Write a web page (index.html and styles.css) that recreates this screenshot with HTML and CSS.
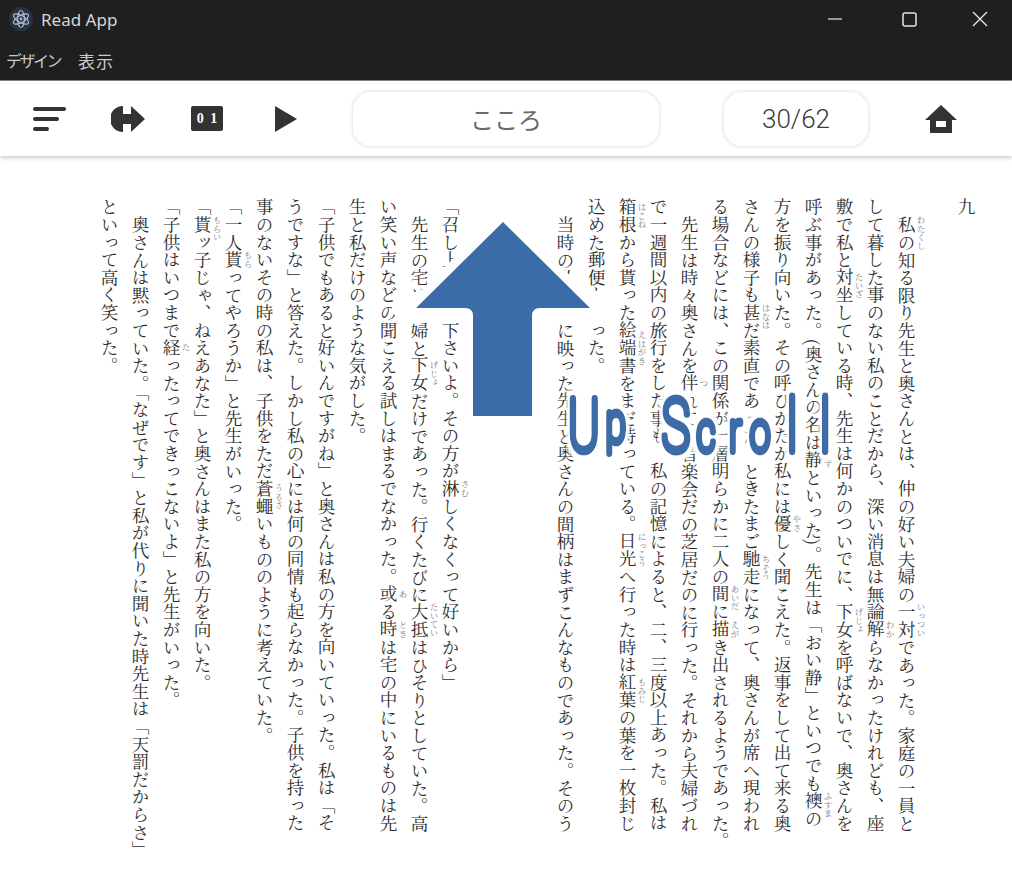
FILE: index.html
```html
<!doctype html>
<html lang="ja">
<head>
  <meta charset="utf-8"/>
  <title>Read App</title>
  <link rel="stylesheet" href="styles.css">
</head>
<body>
<div class="titlebar">
  <div class="app-name">
    <svg class="app-icon" width="24" height="24" viewBox="0 0 24 24" fill="none" stroke="#aebccd" stroke-width="1.2">
      <circle cx="12" cy="12" r="12" fill="#273243" stroke="none"/>
      <ellipse cx="12" cy="12" rx="8.5" ry="3.4" transform="rotate(30 12 12)"/>
      <ellipse cx="12" cy="12" rx="8.5" ry="3.4" transform="rotate(90 12 12)"/>
      <ellipse cx="12" cy="12" rx="8.5" ry="3.4" transform="rotate(150 12 12)"/>
      <circle cx="12" cy="12" r="1.4" fill="#aebccd" stroke="none"/>
    </svg>
    <span>Read App</span>
  </div>
  <div class="window-controls">
    <svg class="win-min" width="14" height="14" viewBox="0 0 14 14" stroke="#d8d8d8" stroke-width="1.3" fill="none"><path d="M0 7H14"/></svg>
    <svg class="win-max" width="15" height="15" viewBox="0 0 15 15" stroke="#e6e6e6" stroke-width="1.5" fill="none"><rect x="1" y="1" width="13" height="13" rx="2"/></svg>
    <svg class="win-close" width="16" height="16" viewBox="0 0 16 16" stroke="#e6e6e6" stroke-width="1.4" fill="none"><path d="M1 1L15 15M15 1L1 15"/></svg>
  </div>
</div>
<div class="menubar">
  <span class="menu-design">デザイン</span>
  <span class="menu-view">表示</span>
</div>
<header class="toolbar">
  <div class="tool-buttons">
    <button class="tool">
      <svg width="34" height="26" viewBox="-1 0 34 26" fill="#333"><rect x="0" y="1" width="33" height="4" rx="2"/><rect x="0" y="11" width="26" height="4" rx="2"/><rect x="0" y="21" width="16" height="4" rx="2"/></svg>
    </button>
    <button class="tool">
      <svg width="34" height="26" viewBox="110 105 34 26" fill="#333"><path d="M122 105A13 13 0 0 0 122 131V123H130V131L144 118L130 105V113H122Z"/></svg>
    </button>
    <button class="tool book">
      <span>0 1</span>
    </button>
    <button class="tool">
      <svg width="22" height="26" viewBox="0 0 22 26" fill="#333"><path d="M0 0L22 13L0 26Z"/></svg>
    </button>
  </div>
  <div class="pill title-pill">こころ</div>
  <div class="pill page-pill">30/62</div>
  <button class="tool home">
    <svg width="32" height="28" viewBox="0 0 32 28" fill="#333"><path fill-rule="evenodd" d="M16 0L32 15H27V28H5V15H0ZM11 16V22H21V16Z"/></svg>
  </button>
</header>
<main class="reader">
  <section class="page page-right">
    <h2 class="chapter">九</h2>
    <p><ruby>私<rt>わたくし</rt></ruby>の知る限り先生と奥さんとは、仲の好い夫婦の<ruby>一対<rt>いっつい</rt></ruby>であった。家庭の一員として暮した事のない私のことだから、深い消息は無論<ruby>解<rt>わか</rt></ruby>らなかったけれども、座敷で私と<ruby>対坐<rt>たいざ</rt></ruby>している時、先生は何かのついでに、<ruby>下女<rt>げじょ</rt></ruby>を呼ばないで、奥さんを呼ぶ事があった。(奥さんの名は<ruby>静<rt>しず</rt></ruby>といった)。先生は「おい静」といつでも<ruby>襖<rt>ふすま</rt></ruby>の方を振り向いた。その呼びかたが私には<ruby>優<rt>やさ</rt></ruby>しく聞こえた。返事をして出て来る奥さんの様子も<ruby>甚<rt>はなは</rt></ruby>だ素直であった。ときたまご<ruby>馳走<rt>ちそう</rt></ruby>になって、奥さんが席へ現われ<br><span class="hang">る場合などには、この関係が一層明らかに二人の<ruby>間<rt>あいだ</rt></ruby>に<ruby>描<rt>えが</rt></ruby>き出されるようであった。</span></p>
    <p>先生は時々奥さんを<ruby>伴<rt>つ</rt></ruby>れて、音楽会だの芝居だのに行った。それから夫婦づれで一週間以内の旅行をした事も、私の記憶によると、二、三度以上あった。私は<ruby>箱根<rt>はこね</rt></ruby>から貰った<ruby>絵端書<rt>えはがき</rt></ruby>をまだ持っている。<ruby>日光<rt>にっこう</rt></ruby>へ行った時は<ruby>紅葉<rt>もみじ</rt></ruby>の葉を一枚封じ込めた郵便も貰った。</p>
    <p>当時の私の眼に映った先生と奥さんの間柄はまずこんなものであった。そのう</p>
  </section>
  <section class="page page-left">
    <p class="no-indent">「召し上がって下さいよ。その方が<ruby>淋<rt>さむ</rt></ruby>しくなくって好いから」</p>
    <p>先生の宅は夫婦と<ruby>下女<rt>げじょ</rt></ruby>だけであった。行くたびに<ruby>大抵<rt>たいてい</rt></ruby>はひそりとしていた。高い笑い声などの聞こえる試しはまるでなかった。<ruby>或<rt>あ</rt></ruby>る<ruby>時<rt>とき</rt></ruby>は宅の中にいるものは先生と私だけのような気がした。</p>
    <p class="no-indent">「子供でもあると好いんですがね」と奥さんは私の方を向いていった。私は「そうですな」と答えた。しかし私の心には何の同情も起らなかった。子供を持った事のないその時の私は、子供をただ<ruby>蒼蠅<rt>うるさ</rt></ruby>いもののように考えていた。</p>
    <p class="no-indent">「一人<ruby>貰<rt>もら</rt></ruby>ってやろうか」と先生がいった。</p>
    <p class="no-indent">「<ruby>貰<rt>もらい</rt></ruby>ッ子じゃ、ねえあなた」と奥さんはまた私の方を向いた。</p>
    <p class="no-indent">「子供はいつまで<ruby>経<rt>た</rt></ruby>ったってできっこないよ」と先生がいった。</p>
    <p><span class="hang">奥さんは黙っていた。「なぜです」と私が代りに聞いた時先生は「天罰だからさ」</span><br>といって高く笑った。</p>
  </section>
  <svg class="overlay" width="1012" height="728" viewBox="0 156 1012 728">
    <defs>
      <filter id="halo" filterUnits="userSpaceOnUse" x="540" y="370" width="320" height="110">
        <feMorphology in="SourceAlpha" operator="dilate" radius="3 5"/>
        <feGaussianBlur stdDeviation="0.8"/>
        <feComponentTransfer result="edge"><feFuncR type="linear" slope="0" intercept="1"/><feFuncG type="linear" slope="0" intercept="1"/><feFuncB type="linear" slope="0" intercept="1"/></feComponentTransfer>
        <feMerge><feMergeNode in="edge"/><feMergeNode in="SourceGraphic"/></feMerge>
      </filter>
    </defs>
    <g class="arrow-halo">
      <rect x="416" y="308" width="174" height="14"/>
      <ellipse cx="416" cy="308" rx="24" ry="16"/>
      <ellipse cx="590" cy="308" rx="20" ry="18"/>
    </g>
    <path class="arrow" d="M503 222L590 308H540Q532 308 532 316V416H473V316Q473 308 465 308H416Z"/>
    <g filter="url(#halo)">
      <text class="scroll-label" transform="scale(.65 1)"><tspan class="cap" x="874" y="451">U</tspan><tspan class="low" x="932" y="442">p</tspan> <tspan class="cap" x="1018" y="451">S</tspan><tspan class="low" x="1072" y="451">c</tspan><tspan class="low" x="1122" y="451">r</tspan><tspan class="low" x="1154" y="451">o</tspan><tspan class="cap" x="1211" y="451">l</tspan><tspan class="cap" x="1262" y="451">l</tspan></text>
    </g>
  </svg>
</main>
</body>
</html>
```

FILE: styles.css
```css
html, body {
  height: 100%;
  margin: 0;
  background: #fff;
  overflow: hidden;
  font-family: "Noto Sans", "Noto Sans CJK JP", sans-serif;
}
.titlebar {
  display: flex;
  justify-content: space-between;
  align-items: center;
  height: 38px;
  padding-bottom: 2px;
  background: #201f1f;
  color: #d6d6d6;
}
.app-name {
  display: flex;
  align-items: center;
  gap: 8px;
  padding-left: 9px;
  font-size: 17px;
}
.window-controls {
  display: flex;
  align-items: center;
  padding-right: 24px;
}
.win-max {
  margin-left: 60px;
}
.win-close {
  margin-left: 55px;
}
.menubar {
  display: flex;
  gap: 18px;
  align-items: center;
  height: 40px;
  padding-left: 6px;
  background: #201f1f;
  color: #c9c9c9;
  font-size: 16px;
  border-bottom: 1px solid #8a8a8a;
}
.menu-design {
  letter-spacing: -2.5px;
}
.menu-view {
  letter-spacing: 1px;
  font-size: 17px;
}
.toolbar {
  position: relative;
  display: flex;
  align-items: center;
  height: 75px;
  background: #fff;
  box-shadow: 0 1px 5px rgba(0, 0, 0, .28);
}
.tool-buttons {
  display: flex;
  gap: 45px;
  padding-left: 32px;
}
.tool {
  display: flex;
  align-items: center;
  justify-content: center;
  width: 34px;
  height: 28px;
  padding: 0;
  border: 0;
  background: none;
}
.book span {
  display: block;
  width: 32px;
  height: 25px;
  border-radius: 2px;
  background: #333;
  color: #fff;
  font: bold 14px/25px "Liberation Serif", serif;
  text-align: center;
  word-spacing: 3px;
  white-space: pre;
}
.pill {
  display: flex;
  align-items: center;
  justify-content: center;
  height: 54px;
  border-radius: 18px;
  background: #fff;
  box-shadow: 0 0 4px rgba(0, 0, 0, .18);
  font-size: 24px;
}
.title-pill {
  width: 306px;
  margin-left: 50px;
  color: #6a6a6a;
}
.page-pill {
  width: 144px;
  margin-left: 65px;
  color: #3c3c3c;
  font-family: Roboto, sans-serif;
  font-size: 26px;
  font-weight: 300;
}
.home {
  margin-left: 56px;
}
.reader {
  position: relative;
  display: flex;
  flex-direction: row-reverse;
  gap: 84px;
  padding: 42px 30px 0 0;
}
.page {
  writing-mode: vertical-rl;
  height: 636px;
  color: #2c2c2c;
  font-family: "Noto Serif CJK JP", "Liberation Serif", "Noto Sans CJK JP", serif;
  font-size: 17.6px;
  line-height: 31px;
}
.page-right {
  width: 432px;
}
.page-left {
  width: 372px;
}
.page p {
  margin: 0;
  text-indent: 1em;
}
.page p.no-indent {
  text-indent: 0;
}
.hang {
  white-space: nowrap;
}
.chapter {
  margin: 0 0 0 29px;
  font-size: 17.6px;
  font-weight: normal;
  line-height: 31px;
}
ruby {
  position: relative;
}
rt {
  position: absolute;
  top: 0;
  right: -6px;
  min-height: 100%;
  font-size: 8.5px;
  line-height: 9px;
  text-align: center;
  white-space: nowrap;
  color: #777;
}
.overlay {
  position: absolute;
  left: 0;
  top: 0;
}
.arrow-halo {
  fill: #fff;
}
.arrow {
  fill: #3b6ca8;
  stroke: #fff;
  stroke-width: 18;
  stroke-linejoin: round;
  paint-order: stroke;
}
.scroll-label {
  font-family: Roboto, sans-serif;
  font-weight: 100;
  fill: #3b6ca8;
  stroke: #3b6ca8;
  stroke-width: 8;
  stroke-linejoin: round;
  vector-effect: non-scaling-stroke;
}
.cap {
  font-size: 73px;
}
.low {
  font-size: 56px;
}
```
